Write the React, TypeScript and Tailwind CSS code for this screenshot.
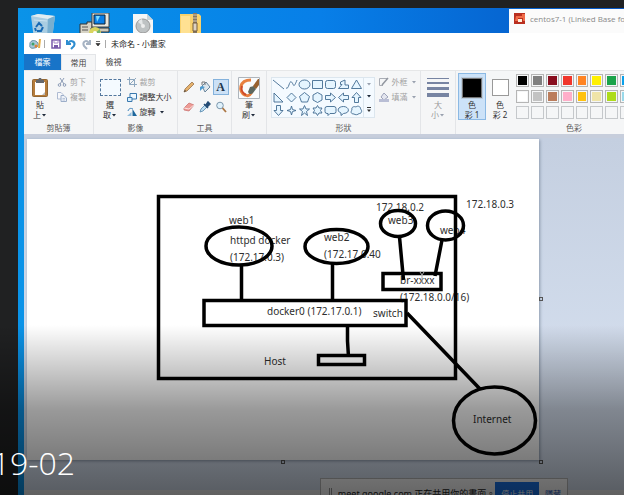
import React from "react";

const rowOne = ["#000000", "#7f7f7f", "#880d1e", "#f0352b", "#ff8424", "#fff000", "#1aa34a", "#0aa0ea", "#3f48cc", "#a349a4"];
const rowTwo = ["#ffffff", "#c3c3c3", "#bb7d5c", "#ffaec9", "#ffc20e", "#efe4a8", "#aedc1a", "#99d9ea", "#7092be", "#c8bfe7"];

const shapes = [
  "M1 2L12 11",
  "M1 10C4 12 4 2 6.500 4S8 12 12 2",
  "M1 6.500a5.500 4.500 0 1 0 11 0a5.500 4.500 0 1 0-11 0",
  "M1.500 2.500h10v8h-10z",
  "M3.500 2.500h6q2 0 2 2v4q0 2-2 2h-6q-2 0-2-2v-4q0-2 2-2z",
  "M1.500 10.500L5 6.500H3.500V4L8 2V7H11.500V10.500z",
  "M6.500 2L11.500 10.500H1.500z",
  "M2 2V11H11z",
  "M6.500 2L11 6.500L6.500 11L2 6.500z",
  "M6.500 1.500L11.500 5.500L9.500 11H3.500L1.500 5.500z",
  "M6.500 1.500L11 4V9L6.500 11.500L2 9V4z",
  "M1.500 4.500H6.500V2L11.500 6.500L6.500 11V8.500H1.500z",
  "M11.500 4.500H6.500V2L1.500 6.500L6.500 11V8.500H11.500z",
  "M4.500 11.500V6.500H2L6.500 1.500L11 6.500H8.500V11.500z",
  "M4.500 1.500V6.500H2L6.500 11.500L11 6.500H8.500V1.500z",
  "M6.500 2L7.500 5.500L11 6.500L7.500 7.500L6.500 11L5.500 7.500L2 6.500L5.500 5.500z",
  "M6.500 1.500L8 5H11.500L8.500 7.500L9.500 11.500L6.500 9L3.500 11.500L4.500 7.500L1.500 5H5z",
  "M6.500 1.500L8 4H11L9.500 6.500L11 9H8L6.500 11.500L5 9H2L3.500 6.500L2 4H5z",
  "M3 2.500h7q2 0 2 2v3q0 2-2 2H6L4 11.500V9.500H3q-2 0-2-2v-3q0-2 2-2z",
  "M4 9C-1 7 1 2.500 6.500 2.500S14 9 6.500 9.500L4 11.500z",
  "M4 10C0 10 1 7 2 6C1 3 4 2 6 3C8 1 11 3 10.500 5C13 7 11 10 9 9.500C8 11 5 11 4 10z",
];

function Arrow({ faint = false }: { faint?: boolean }) {
  return (
    <svg viewBox="0 0 6 4" className={"inline-block h-1 w-1.5 " + (faint ? "text-gray-400" : "text-gray-800")} aria-hidden="true">
      <path d="M1 1H5L3 3.500z" fill="currentColor" />
    </svg>
  );
}

function Group({ label, className, children }: { label?: string; className: string; children: React.ReactNode }) {
  return (
    <section className={"flex shrink-0 flex-col justify-between border-r border-[#e3e5e8] " + className}>
      <div className="flex justify-center">{children}</div>
      <div className="h-3 text-center leading-3 text-[#5c5c5c]">{label}</div>
    </section>
  );
}

function BigButton({ icon, top, bottom, menu = true, faint = false }: { icon: React.ReactNode; top: string; bottom: string; menu?: boolean; faint?: boolean }) {
  return (
    <button className={"flex flex-col items-center pt-1 leading-[10px] " + (faint ? "text-[#999]" : "text-[#333]")}>
      <span className="flex h-[25px] items-center">{icon}</span>
      <span>{top}</span>
      <span className="flex items-center whitespace-nowrap">
        {bottom}
        {menu && <Arrow faint={faint} />}
      </span>
    </button>
  );
}

function SmallButton({ icon, text, faint = false, menu = false }: { icon: React.ReactNode; text: string; faint?: boolean; menu?: boolean }) {
  return (
    <button className={"flex h-[15px] items-center gap-[3px] whitespace-nowrap " + (faint ? "text-[#a3a3a3]" : "text-[#333]")}>
      <svg viewBox="0 0 10 10" className="h-2.5 w-2.5" fill="none" aria-hidden="true">{icon}</svg>
      <span>{text}</span>
      {menu && <Arrow faint={faint} />}
    </button>
  );
}

function DesktopIcons() {
  return (
    <div className="flex items-start gap-[21px] pt-[5px] pl-3" aria-hidden="true">
      <svg viewBox="0 0 28 26" className="h-[26px] w-7">
        <path d="M1 3L8 1L25 3L22 26H4z" fill="#a9cde2" />
        <path d="M1 3L8 1L25 3L18 6z" fill="#e0edf2" />
        <path d="M18 6L25 3L22 26H17z" fill="#78afd0" />
        <path d="M4 7L17 8" stroke="#cce3ef" strokeWidth="1" />
        <path d="M6 14L9 10L12 13M13 14L11 18H7M5 15L6 18" stroke="#1769b4" strokeWidth="2" fill="none" />
      </svg>
      <svg viewBox="0 1 32 26" className="h-[26px] w-8">
        <path d="M1 12H8V10H13V27H1z" fill="#d7d3c5" stroke="#333" />
        <path d="M3 15H9M3 18H9" stroke="#555" />
        <path d="M13 1H30V15H13z" fill="#e9e7de" stroke="#444" />
        <path d="M15 3H26V12H15z" fill="#087fe8" stroke="#123" />
        <path d="M17 4L21 4L18 10z" fill="#7edcff" />
        <path d="M12 16H30V20H12z" fill="#ccc9bb" stroke="#333" />
        <circle cx="16" cy="21" r="6" fill="#d9d45e" />
        <path d="M16 21L21 17V25z" fill="#75b66c" />
        <circle cx="16" cy="21" r="2" fill="#fff" />
      </svg>
      <svg viewBox="0 1 22 26" className="h-[26px] w-[22px]">
        <path d="M1 2H15L21 8V27H1z" fill="#f5f6f6" />
        <path d="M15 2V8H21z" fill="#c9d3d8" />
        <circle cx="11" cy="14" r="7" fill="#bec2c3" stroke="#999" />
        <path d="M11 14L6 10A7 7 0 0 1 10 7z" fill="#e5e7e8" />
        <circle cx="11" cy="14" r="2" fill="#eee" />
      </svg>
      <svg viewBox="0 1 24 26" className="ml-1 h-[26px] w-6">
        <path d="M1 2H20L22 4V27H1z" fill="#f8d26d" />
        <path d="M2 4H11V27H2z" fill="#ffe192" />
        <path d="M14 1H18V27H14z" fill="#857660" />
        <path d="M14 3H18M14 6H18M14 9H18" stroke="#d7c7aa" />
        <path d="M14 11H18V19H14z" fill="#ddd2c1" stroke="#765e3c" />
      </svg>
    </div>
  );
}

function TitleBar() {
  return (
    <header className="flex h-[21px] items-center pl-1 text-[#222]">
      <svg viewBox="0 0 14 12" className="h-3 w-3.5" aria-hidden="true">
        <path d="M2 7C1 3 6 1 9 4C12 7 9 10 6 10C3 11 1 9 2 7z" fill="#a9c7d8" stroke="#668fa6" />
        <circle cx="5" cy="6" r="1.500" fill="#3ca16a" /><circle cx="8" cy="8" r="1.500" fill="#e08135" />
        <path d="M10 10L11 1L13 1L12 10z" fill="#e5ae45" />
      </svg>
      <span className="ml-0.5 h-2 w-px bg-[#aaa]" />
      <button className="ml-1.5" aria-label="儲存">
        <svg viewBox="0 0 10 10" className="h-2.5 w-2.5"><path d="M1 1H9V9H1z" fill="#fff" stroke="#7859aa" strokeWidth="1.500" /><path d="M3 6H7V9H3z" fill="#7859aa" /><path d="M3 1V4H7V1" fill="none" stroke="#a78ac8" /></svg>
      </button>
      <button className="ml-1" aria-label="復原">
        <svg viewBox="0 0 12 12" className="h-3 w-3"><path d="M2 2V6H6M3 5C6 1 11 4 9 8L6 11" fill="none" stroke="#2e8dd0" strokeWidth="2" /></svg>
      </button>
      <button className="ml-1" aria-label="重做">
        <svg viewBox="0 0 12 12" className="h-3 w-3"><path d="M9 2V6H5M8 5C5 1 1 4 3 8L6 11" fill="none" stroke="#a6b3c3" strokeWidth="2" /></svg>
      </button>
      <button className="ml-0.5 flex items-center" aria-label="自訂快速存取工具列">
        <svg viewBox="0 0 6 6" className="h-1.5 w-1.5"><path d="M1 .5H5M1 2.500H5L3 5z" stroke="#333" fill="#333" strokeWidth=".7" /></svg>
      </button>
      <span className="ml-1 h-2 w-px bg-[#aaa]" />
      <h1 className="ml-[5px] whitespace-nowrap">未命名 - 小畫家</h1>
    </header>
  );
}

function Ribbon() {
  return (
    <div className="flex h-16 overflow-hidden border-t border-[#e6e7e8] bg-[#f5f6f7]">
      <Group label="剪貼簿" className="w-[70px]">
        <BigButton top="貼" bottom="上" icon={
          <svg viewBox="0 0 18 21" className="h-[21px] w-[18px]"><rect x="1.500" y="2.500" width="15" height="17" rx="1" fill="#b57c3c" stroke="#936631" /><path d="M4 5H14V18H4z" fill="#fff" /><path d="M5 3H7L8 1H10L11 3H13V6H5z" fill="#64686d" /><path d="M11 18L14 15V18z" fill="#bbb" /></svg>
        } />
        <div className="ml-2 pt-[3px]">
          <SmallButton faint text="剪下" icon={<><path d="M3 1L7 7M7 1L3 7" stroke="#8c9cb6" /><circle cx="2.500" cy="8" r="1.300" stroke="#8c9cb6" /><circle cx="7.500" cy="8" r="1.300" stroke="#8c9cb6" /></>} />
          <SmallButton faint text="複製" icon={<><path d="M.5.5H4L6 2.500V7H.5z" fill="#f7f8fb" stroke="#aebbd2" /><path d="M4 3.500H7L9.500 6V9.500H4z" fill="#edf1f8" stroke="#9caec9" /><path d="M5.500 6.500H8M5.500 8H8" stroke="#bac6da" /></>} />
        </div>
      </Group>
      <Group label="影像" className="w-[84px]">
        <BigButton top="選" bottom="取" icon={<span className="h-[17px] w-[21px] border border-dashed border-[#53779d] bg-[#f4faff]" />} />
        <div className="ml-1.5 pt-[3px]">
          <SmallButton faint text="裁剪" icon={<path d="M2.500 0V7.500H10M0 2.500H7.500V10M2.500 7.500L9 1" stroke="#8fa8bf" />} />
          <SmallButton text="調整大小" icon={<><path d="M3 1.500H9.500V7H3z" fill="#eef8ff" stroke="#3a78ad" /><path d="M.5 5.500H5V9.500H.5z" fill="#d8efff" stroke="#3a78ad" /></>} />
          <SmallButton text="旋轉" menu icon={<><path d="M5.500 2V9H10z" fill="#1c669c" /><path d="M4.500 5V9H0z" fill="#91bcdc" /><path d="M1 4C2 1 4 1 6 2" stroke="#3f83ba" /></>} />
        </div>
      </Group>
      <Group label="工具" className="w-[54px]">
        <div className="grid grid-cols-3 gap-y-1 pt-2">
          <button className="flex h-4 w-4 items-center justify-center" aria-label="鉛筆"><svg viewBox="0 0 12 12" className="h-3 w-3"><path d="M1 11L2 8L9 1L11 3L4 10z" fill="#e5b16c" stroke="#8c6742" strokeWidth=".7" /><path d="M1 11L2 9L3 10z" fill="#333" /></svg></button>
          <button className="flex h-4 w-4 items-center justify-center" aria-label="填入色彩"><svg viewBox="0 0 12 12" className="h-3 w-3"><path d="M3 5L7 1L11 6L6 11z" fill="#dce6ed" stroke="#68849b" /><path d="M3 4V1H6V4" fill="none" stroke="#777" /><path d="M3 5L1 6V10L3 8L6 6z" fill="#4e9bd0" /></svg></button>
          <button className="flex h-4 w-4 items-center justify-center border border-[#84b2dc] bg-[#cce1f6] font-['Liberation_Serif',serif] text-xs font-bold text-[#20364d]" aria-label="文字">A</button>
          <button className="flex h-4 w-4 items-center justify-center" aria-label="橡皮擦"><svg viewBox="0 0 12 12" className="h-3 w-3"><path d="M1 7L6 2L11 4L6 10L1 9z" fill="#ed9b95" stroke="#c76b69" strokeWidth=".7" /><path d="M1 7L6 8L11 4" fill="none" stroke="#fff" strokeWidth=".7" /></svg></button>
          <button className="flex h-4 w-4 items-center justify-center" aria-label="色彩選擇器"><svg viewBox="0 0 12 12" className="h-3 w-3"><path d="M1 11L2 8L6 4L8 6L4 10z" fill="#bfe0f3" stroke="#5487ac" strokeWidth=".8" /><path d="M5 3L9 7M7 4L9 1L11 3L8 6" fill="#244c75" stroke="#244c75" strokeWidth="1.500" /></svg></button>
          <button className="flex h-4 w-4 items-center justify-center" aria-label="放大鏡"><svg viewBox="0 0 12 12" className="h-3 w-3"><circle cx="5" cy="4.500" r="3.300" fill="#dff1fb" stroke="#7b96ab" /><path d="M7.500 7L11 11" stroke="#ab7644" strokeWidth="1.800" /></svg></button>
        </div>
      </Group>
      <Group className="w-[35px]">
        <BigButton top="筆" bottom="刷" icon={
          <svg viewBox="0 0 22 22" className="h-[22px] w-[22px]"><path d="M.5.5H21.500V21.500H.5z" fill="#f9fbfc" stroke="#aeb5bc" /><path d="M13 3C1 3 0 15 7 18C11 20 13 17 14 14" fill="none" stroke="#e8803f" strokeWidth="3" /><path d="M8 18C4 16 3 12 4 9" fill="none" stroke="#cf4a28" strokeWidth="2" /><path d="M10 15L12 10L16 9L18 12L15 16C13 18 11 17 10 15z" fill="#5d675e" /><path d="M15 9L20 2H21V8L18 12z" fill="#97602e" /></svg>
        } />
      </Group>
      <Group label="形狀" className="w-[154px]">
        <div className="mt-1.5 flex h-[41px] w-[104px] border border-[#dce6ee] bg-[#f4faff]">
          <div className="grid grid-cols-7">
            {shapes.map((d) => (
              <button key={d} className="h-[13px] w-[13px]" aria-label="形狀">
                <svg viewBox="0 0 13 13" className="h-[13px] w-[13px]"><path d={d} fill={d === shapes[0] || d === shapes[1] ? "none" : "#e5f5ff"} stroke="#426b91" strokeWidth=".9" /></svg>
              </button>
            ))}
          </div>
          <div className="flex flex-1 flex-col items-center justify-around border-l border-[#dce6ee]">
            <Arrow faint /><Arrow />
            <svg viewBox="0 0 6 6" className="h-1.5 w-1.5"><path d="M1 .5H5" stroke="#333" /><path d="M1 2.500H5L3 5z" fill="#333" /></svg>
          </div>
        </div>
        <div className="ml-1 pt-[3px]">
          <SmallButton faint menu text="外框" icon={<><path d="M.5 1.500H9M.5 1.500V8.500H4" stroke="#a9adb5" /><path d="M3 8L9 1" stroke="#9297a0" strokeWidth="1.500" /></>} />
          <SmallButton faint menu text="填滿" icon={<><path d="M2 5L5 1L9 5L5 8z" fill="#e4e6ef" stroke="#9da3ba" /><path d="M0 7H10V10H0z" fill="#b9bed5" /></>} />
        </div>
      </Group>
      <Group className="w-[35px]">
        <BigButton faint top="大" bottom="小" icon={
          <span className="flex w-[22px] flex-col gap-[3px]"><span className="h-px bg-[#7784a2]" /><span className="h-0.5 bg-[#7784a2]" /><span className="h-[3px] bg-[#7784a2]" /><span className="h-1 bg-[#7784a2]" /></span>
        } />
      </Group>
      <section className="flex min-w-0 flex-1 flex-col justify-between overflow-hidden pl-0.5">
        <div className="flex">
          <div className="mt-0.5 flex h-[47px] w-7 shrink-0 justify-center border border-[#8bb9e4] bg-[#cce2f8]">
            <div className="-mt-[3px]"><BigButton menu={false} top="色" bottom="彩 1" icon={<span className="h-5 w-5 border border-[#777] bg-black outline outline-[#b9cbdd]" />} /></div>
          </div>
          <div className="flex w-7 shrink-0 justify-center"><BigButton menu={false} top="色" bottom="彩 2" icon={<span className="h-[17px] w-[17px] border border-[#999] bg-white" />} /></div>
          <div className="ml-0.5 mt-[3px] grid w-[147px] shrink-0 grid-cols-10 gap-x-0.5 gap-y-0.5">
            {[...rowOne, ...rowTwo].map((color) => (
              <button key={color} aria-label={color} className="h-[13px] border border-[#b5b5b5] p-px"><span className="block h-full" style={{ backgroundColor: color }} /></button>
            ))}
            {rowOne.map((color) => <button key={color} aria-label="空白色彩" className="h-[13px] border border-[#c5c8cb]" />)}
          </div>
        </div>
        <div className="h-3 w-[232px] text-center leading-3 text-[#5c5c5c]">色彩</div>
      </section>
    </div>
  );
}

function Diagram() {
  return (
    <svg viewBox="27 139 512 321" className="block h-full w-full font-['Noto_Sans',sans-serif] text-[10px]" role="img" aria-label="Docker network">
      <g fill="#2e2e2e">
        <text x="229" y="224">web1</text>
        <text x="230" y="244">httpd docker</text>
        <text x="230" y="261">(172.17.0.3)</text>
        <text x="324" y="241">web2</text>
        <text x="324" y="258">(172.17.0.40</text>
        <text x="376" y="211">172.18.0.2</text>
        <text x="466" y="208">172.18.0.3</text>
        <text x="388" y="224">web3</text>
        <text x="440" y="234">web4</text>
        <text x="400" y="284">br-xxxx</text>
        <text x="400" y="301">(172.18.0.0/16)</text>
        <text x="267" y="315">docker0 (172.17.0.1)</text>
        <text x="373" y="317">switch</text>
        <text x="264" y="365">Host</text>
        <text x="473" y="423">Internet</text>
      </g>
      <g fill="none" stroke="#000" strokeWidth="3.500">
        <rect x="158.500" y="196.500" width="297" height="182" />
        <rect x="204" y="300.500" width="202" height="25" />
        <rect x="383" y="273.500" width="58" height="16" />
        <rect x="318.500" y="355.500" width="46" height="9" />
        <ellipse cx="239" cy="246" rx="33" ry="19" />
        <ellipse cx="336.500" cy="246.500" rx="31.500" ry="17" />
        <ellipse cx="398" cy="223.500" rx="17.500" ry="13" />
        <ellipse cx="445.500" cy="225.500" rx="18" ry="14.500" />
        <ellipse cx="494.500" cy="420.500" rx="41" ry="33.500" />
        <path d="M241.500 265V300M332.500 264V300M399.500 237L403.500 280M442 240L435 276M407 313L480 389M347.500 324V341L348.500 357" />
      </g>
      <path d="M420 272L422 275L424 272M422 275V283" fill="none" stroke="#aaa" />
    </svg>
  );
}

function Handle({ className }: { className: string }) {
  return <span className={"absolute h-1 w-1 border border-[#555] " + className} />;
}

export default function App() {
  return (
    <main className="relative flex h-screen overflow-hidden bg-[#202122] pt-2 pl-[18px] font-['Noto_Sans','Noto_Sans_CJK_TC',sans-serif] text-[8px]">
      <div className="relative min-w-0 flex-1 overflow-hidden bg-linear-to-r from-[#0a93e8] via-[#087fe8] to-[#0756c4]">
        <DesktopIcons />
        <section className="absolute top-px right-0 flex h-8 w-[115px] items-start gap-1 bg-[#fbfbfb] pt-1 pl-[5px] text-[#8a8a8a]">
          <svg viewBox="0 0 12 12" className="h-3 w-3 shrink-0" aria-hidden="true"><path d="M0 0H11V11H0z" fill="#b92f20" /><path d="M2 3H8V1H11V8H9V5H4V8H1z" fill="#f06c49" /><path d="M4 6H8V9H4z" fill="#fff0dc" /></svg>
          <span className="font-['Open_Sans',sans-serif] leading-3 whitespace-nowrap">centos7-1 (Linked Base fo</span>
        </section>
        <section className="absolute top-[25px] right-0 bottom-0 left-1.5 flex flex-col bg-white">
          <TitleBar />
          <nav className="flex h-4 text-[#444]">
            <button className="w-[37px] bg-[#1874c8] text-white">檔案</button>
            <button className="w-[35px] border-x border-t border-[#e3e5e8] bg-[#f5f6f7]">常用</button>
            <button className="w-[35px]">檢視</button>
          </nav>
          <Ribbon />
          <div className="flex-1 border-t-4 border-[#c7cedc] bg-linear-to-b from-[#c4cfe0] to-[#dbe5f4] pt-px pl-[3px]">
            <div className="relative h-[321px] w-[512px] bg-white shadow-[1px_1px_3px_#8b98ac]">
              <Diagram />
              <Handle className="top-[158px] -right-1" />
              <Handle className="-right-1 -bottom-1" />
              <Handle className="-bottom-1 left-[254px]" />
            </div>
          </div>
          <footer className="h-[5px] bg-[#f0f0f0]" />
        </section>
        <section className="absolute top-[470px] left-[302px] flex h-8 w-[248px] items-center border border-[#bbb] bg-white pl-2 text-[9px] whitespace-nowrap text-[#222]">
          <span className="mr-1.5 h-3 w-[3px] border-x border-[#999]" />
          <span className="flex-1 leading-3">meet.google.com 正在共用你的畫面。</span>
          <button className="h-6 w-[54px] bg-[#1a73e8] text-[8px] text-white">停止共用</button>
          <button className="mx-1.5 text-[8px] text-[#1a55b8]">隱藏</button>
        </section>
      </div>
      <div className="pointer-events-none absolute inset-x-0 bottom-0 h-[170px] bg-linear-to-b from-transparent via-black/40 to-black/60" />
      <p className="absolute bottom-3 left-0 flex w-[75px] justify-end font-['Open_Sans','Noto_Sans',sans-serif] text-[32px] leading-10 font-light whitespace-nowrap text-white">19-02</p>
    </main>
  );
}
